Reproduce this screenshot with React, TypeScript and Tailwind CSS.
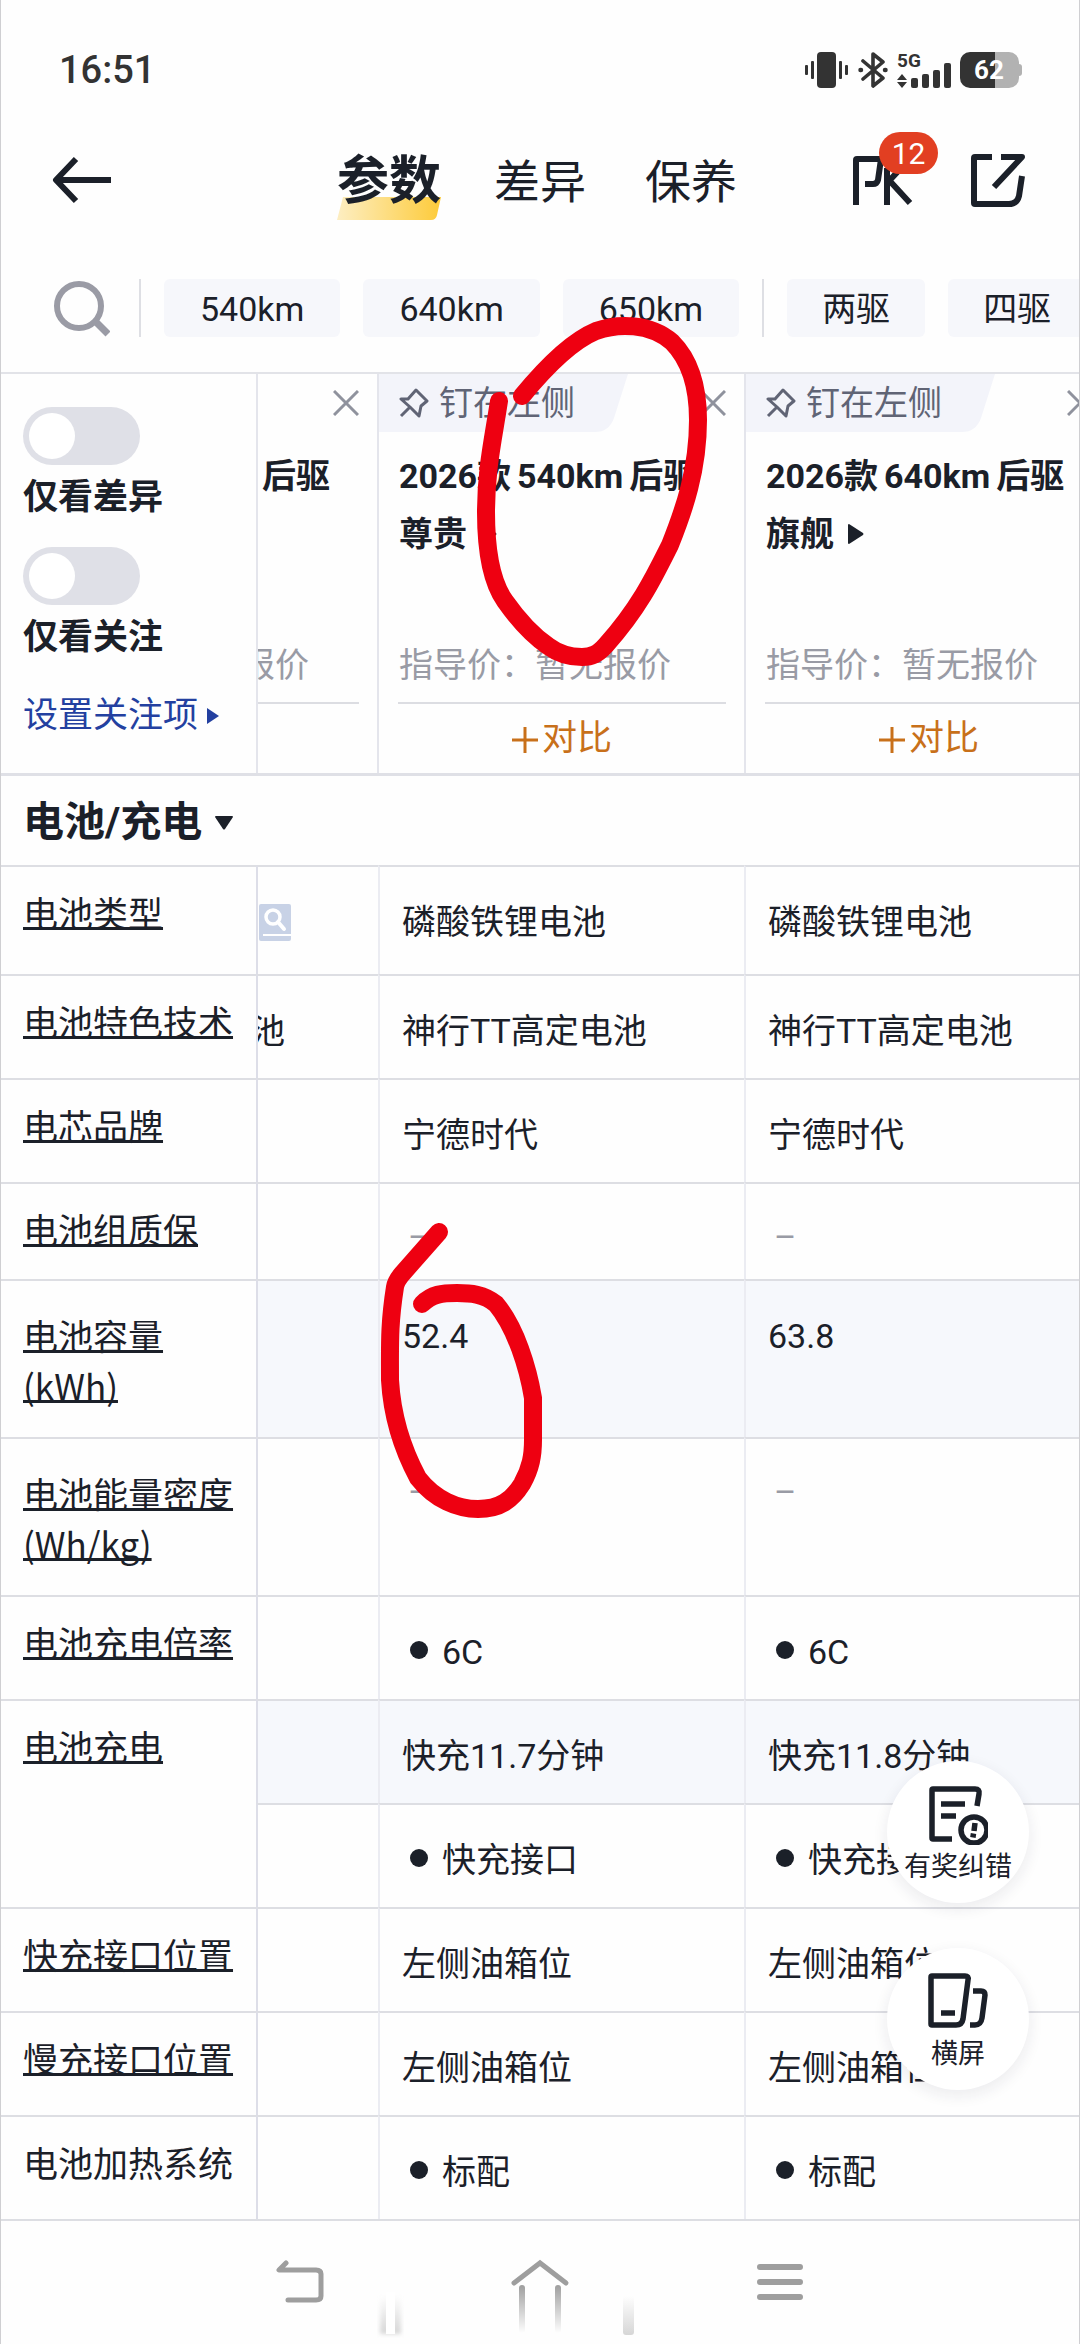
import { useState } from "react";
import type { ReactNode } from "react";
import clsx from "clsx";

interface Spec {
  label: string;
  unit?: string;
  plain?: boolean;
  height: string;
  span?: number;
  continued?: boolean;
  diff?: boolean;
  bullet?: boolean;
  previous?: "doc" | "text";
  values: [string, string];
}

const specs: Spec[] = [
  { label: "电池类型", height: "h-[109px]", previous: "doc", values: ["磷酸铁锂电池", "磷酸铁锂电池"] },
  { label: "电池特色技术", height: "h-[104px]", previous: "text", values: ["神行TT高定电池", "神行TT高定电池"] },
  { label: "电芯品牌", height: "h-[104px]", values: ["宁德时代", "宁德时代"] },
  { label: "电池组质保", height: "h-[97px]", values: ["–", "–"] },
  { label: "电池容量", unit: "(kWh)", height: "h-[158px]", diff: true, values: ["52.4", "63.8"] },
  { label: "电池能量密度", unit: "(Wh/kg)", height: "h-[158px]", values: ["–", "–"] },
  { label: "电池充电倍率", height: "h-[104px]", bullet: true, values: ["6C", "6C"] },
  { label: "电池充电", height: "h-[104px]", span: 2, diff: true, values: ["快充11.7分钟", "快充11.8分钟"] },
  { label: "快充接口", height: "h-[104px]", continued: true, bullet: true, values: ["快充接口", "快充接口"] },
  { label: "快充接口位置", height: "h-[104px]", values: ["左侧油箱位", "左侧油箱位"] },
  { label: "慢充接口位置", height: "h-[104px]", values: ["左侧油箱位", "左侧油箱位"] },
  { label: "电池加热系统", height: "h-[104px]", plain: true, bullet: true, values: ["标配", "标配"] },
];

const ranges = ["540km", "640km", "650km"];
const drives = ["两驱", "四驱"];
const tabs = ["参数", "差异", "保养"];

function StatusBar() {
  return (
    <div className="flex h-[140px] items-center justify-between pr-[57px] pl-[58px] text-[#333]">
      <span className="text-[38px] leading-none font-medium">16:51</span>
      <div className="flex items-center gap-[9px]">
        {/* vibrate */}
        <svg width="44" height="36" viewBox="0 0 44 36" fill="currentColor">
          <rect x="12" width="19" height="36" rx="4" />
          <rect x="6" y="9" width="3" height="18" rx="1" />
          <rect x="34" y="9" width="3" height="18" rx="1" />
          <rect x="0" y="13" width="3" height="10" rx="1" />
          <rect x="40" y="13" width="3" height="10" rx="1" />
        </svg>
        {/* bluetooth */}
        <svg width="30" height="36" viewBox="0 0 30 36" fill="none" stroke="currentColor" strokeWidth="3.6" strokeLinejoin="round" strokeLinecap="round">
          <path d="M5 9l20 17-10 8V2l10 8L5 27" />
          <path d="M2.500 18h.5M27 18h.5" strokeWidth="4.500" />
        </svg>
        {/* signal */}
        <div className="relative h-9 w-[54px]">
          <span className="absolute -top-px left-0 text-[19px] leading-none font-bold">5G</span>
          <svg width="54" height="36" viewBox="0 0 54 36" fill="currentColor">
            <path d="M5 22l5 6H0zM5 36l5-6H0z" />
            <rect x="14" y="26" width="7" height="10" rx="2" />
            <rect x="25" y="22" width="7" height="14" rx="2" />
            <rect x="36" y="18" width="7" height="18" rx="2" />
            <rect x="47" y="11" width="7" height="25" rx="2" />
          </svg>
        </div>
        {/* battery */}
        <div className="flex items-center">
          <div className="flex h-9 w-[59px] items-center justify-center rounded-[10px] bg-linear-to-r from-[#333] from-60% to-[#b2b2b2] to-60% pr-px text-[26px] leading-none font-bold text-white">
            62
          </div>
          <div className="h-3 w-[3px] rounded-r-sm bg-[#b2b2b2]" />
        </div>
      </div>
    </div>
  );
}

function Header() {
  const [active, setActive] = useState("参数");
  return (
    <header className="grid h-20 grid-cols-[336px_1fr_auto] items-center pr-[53px]">
      <button aria-label="返回" className="pl-[51px]">
        <svg width="60" height="48" viewBox="0 0 60 48" fill="none" stroke="currentColor" strokeWidth="6" strokeLinejoin="round">
          <path d="M24 3L4 24l20 21M4 24h55" />
        </svg>
      </button>
      <nav className="flex items-center">
        {tabs.map((tab) => (
          <button
            key={tab}
            onClick={() => setActive(tab)}
            className={clsx(
              "relative pt-1 leading-[76px] whitespace-nowrap",
              tab === active ? "mr-[53px] text-[52px] font-bold" : "mr-[59px] text-[46px]",
            )}
          >
            {tab === active && (
              <svg className="absolute bottom-0 left-0" width="104" height="23" viewBox="0 0 104 23">
                <defs>
                  <linearGradient id="tab-mark">
                    <stop offset="0" stopColor="#fdeec2" />
                    <stop offset="1" stopColor="#fdcb3a" />
                  </linearGradient>
                </defs>
                <path d="M6 0h98l-4 18q-1 5-6 5H0z" fill="url(#tab-mark)" />
              </svg>
            )}
            <span className="relative">{tab}</span>
          </button>
        ))}
      </nav>
      <div className="flex items-center gap-[58px]">
        <button aria-label="PK 对比" className="relative">
          <svg width="60" height="52" viewBox="0 0 60 52" fill="none" stroke="currentColor" strokeWidth="6">
            <path d="M3 51V6q0-1 1-1h24l-3 21q-1 4-5 4h-8" strokeLinejoin="round" />
            <path d="M34 51V14M35 25l22 24M36 27L50 12" />
          </svg>
          <span className="absolute -top-[22px] left-[26px] flex h-[42px] w-[59px] items-center justify-center rounded-full bg-[#e23f22] text-[30px] text-white">
            12
          </span>
        </button>
        <button aria-label="分享">
          <svg width="55" height="54" viewBox="0 0 55 54" fill="none" stroke="currentColor" strokeWidth="6" strokeLinejoin="round">
            <path d="M21 4H4q-1 0-1 1v45q0 1 1 1h34q8 0 10-8l3-20" />
            <path d="M30 4h21L23 34" />
          </svg>
        </button>
      </div>
    </header>
  );
}

function Filters() {
  return (
    <div className="mt-[59px] flex h-[58px] items-stretch gap-[23px] overflow-hidden pl-[51px]">
      <button aria-label="搜索" className="mr-[6px] shrink-0 text-[#9a9ba5]">
        <svg width="58" height="58" viewBox="0 0 58 58" fill="none" stroke="currentColor" strokeWidth="6">
          <circle cx="27" cy="27" r="22" />
          <path d="M43 42l13 13" strokeWidth="7" />
        </svg>
      </button>
      <span className="w-[2px] shrink-0 bg-[#dedfe4]" />
      {ranges.map((r) => (
        <button key={r} className="shrink-0 rounded-md bg-[#f6f7fb] px-9 pt-[2px] text-[34px]">
          {r}
        </button>
      ))}
      <span className="w-[2px] shrink-0 bg-[#dedfe4]" />
      {drives.map((d) => (
        <button key={d} className="shrink-0 rounded-md bg-[#f6f7fb] px-[35px] pt-[2px] text-[34px]">
          {d}
        </button>
      ))}
    </div>
  );
}

function Toggle({ id, label }: { id: string; label: string }) {
  const [on, setOn] = useState(false);
  return (
    <div className="mb-6">
      <input
        id={id}
        type="checkbox"
        checked={on}
        onChange={() => setOn(!on)}
        className="block h-[58px] w-[117px] appearance-none rounded-full bg-[#dfe0e7] p-[6px] before:block before:size-[46px] before:rounded-full before:bg-white checked:bg-[#fdcb3a] checked:before:ml-[59px]"
      />
      <label htmlFor={id} className="mt-2 block text-[35px] leading-[50px] font-bold">
        {label}
      </label>
    </div>
  );
}

function CloseIcon() {
  return (
    <svg width="26" height="26" viewBox="0 0 26 26" fill="none" stroke="#8f929d" strokeWidth="3">
      <path d="M1 1l24 24M25 1L1 25" />
    </svg>
  );
}

function ModelCard({ range, trim }: { range: string; trim: string }) {
  return (
    <article className="flex w-[367px] shrink-0 flex-col border-l-2 border-[#e4e5ec]">
      <div className="flex h-[58px] items-center justify-between pr-[18px] text-[#606475]">
        <button className="relative flex h-full w-[249px] items-center gap-[10px] pl-5 text-[34px]">
          <svg className="absolute top-0 left-0" width="249" height="58" viewBox="0 0 249 58">
            <path d="M0 0h249l-14 44q-5 14-19 14H0z" fill="#f3f4fa" />
          </svg>
          <svg className="relative" width="30" height="30" viewBox="0 0 30 30" fill="none" stroke="currentColor" strokeWidth="3" strokeLinejoin="round">
            <path d="M2 11l7 0L17 2l11 11-6 5-2 10-9-9zM11 19L2 28" />
          </svg>
          <span className="relative">钉在左侧</span>
        </button>
        <button aria-label="移除">
          <CloseIcon />
        </button>
      </div>
      <h3 className="mt-[15px] pl-5 text-[34px] leading-[58px] font-bold">
        <span className="flex gap-[6px] whitespace-nowrap">
          <span>2026款</span>
          <span>{range}</span>
          <span>后驱</span>
        </span>
        <span className="flex items-center gap-[14px]">
          {trim}
          <svg width="16" height="20" viewBox="0 0 16 20" fill="currentColor">
            <path d="M0 1q0-1 1-1l14 9q1 1 0 2L1 20q-1 0-1-1z" />
          </svg>
        </span>
      </h3>
      <p className="mt-auto mb-3 pl-5 text-[34px] leading-[50px] whitespace-nowrap text-[#999ba5]">指导价：暂无报价</p>
      <button className="mr-[18px] ml-[19px] flex h-[71px] items-center justify-center gap-[4px] border-t-2 border-[#dcdde2] pt-[2px] text-[35px] text-[#c8701a]">
        <svg width="26" height="26" viewBox="0 0 26 26" fill="none" stroke="currentColor" strokeWidth="3">
          <path d="M13 0v26M0 13h26" />
        </svg>
        对比
      </button>
    </article>
  );
}

// the model scrolled under the fixed column, only its right edge shows
function PreviousModel() {
  return (
    <article className="flex w-[121px] shrink-0 flex-col overflow-hidden border-l-2 border-[#e4e5ec] whitespace-nowrap">
      <div className="flex h-[58px] items-center justify-end pr-[18px]">
        <button aria-label="移除">
          <CloseIcon />
        </button>
      </div>
      <h3 className="mt-[15px] flex justify-end pr-[47px] text-[34px] leading-[58px] font-bold">后驱</h3>
      <p className="mt-auto mb-3 flex justify-end pr-[68px] text-[34px] leading-[50px] text-[#999ba5]">报价</p>
      <div className="mr-[18px] h-[71px] border-t-2 border-[#dcdde2]" />
    </article>
  );
}

function DocIcon() {
  return (
    <svg width="32" height="37" viewBox="0 0 32 37">
      <rect width="32" height="37" rx="2" fill="#c8d2e6" />
      <circle cx="14" cy="13" r="7" fill="none" stroke="#fff" strokeWidth="3.5" />
      <path d="M19 18l6 7" stroke="#fff" strokeWidth="4" strokeLinecap="round" />
      <path d="M4 31h28" stroke="#fff" strokeWidth="2" />
    </svg>
  );
}

function SpecTable() {
  return (
    <table className="w-full table-fixed border-separate border-spacing-0 border-b-2 border-[#dddee3] text-left text-[34px] leading-[50px]">
      <colgroup>
        <col className="w-[255px]" />
        <col className="w-[122px]" />
        <col className="w-[366px]" />
        <col />
      </colgroup>
      <tbody>
        {specs.map((s) => (
          <tr key={s.label} className={s.height}>
            {!s.continued && (
              <th
                scope="row"
                rowSpan={s.span}
                className={clsx(
                  "border-t-2 border-[#dddee3] pl-[22px] align-top font-['Noto_Sans_CJK_SC',sans-serif] text-[35px] font-normal whitespace-nowrap",
                  s.unit ? "pt-[29px]" : "pt-[20px]",
                  !s.plain && "underline decoration-[3px] underline-offset-[0px] [text-decoration-skip-ink:none]",
                )}
              >
                {s.label}
                {s.unit && <span className="block">{s.unit}</span>}
              </th>
            )}
            <td
              className={clsx(
                "overflow-hidden border-t-2 border-l-2 border-t-[#dddee3] border-l-[#dddee8] pt-[30px] align-top",
                s.diff && "bg-[#f6f8fc]",
              )}
            >
              {s.previous === "doc" && (
                <div className="flex h-[50px] items-center pl-px">
                  <DocIcon />
                </div>
              )}
              {s.previous === "text" && <div className="flex justify-end pr-[93px]">池</div>}
            </td>
            {s.values.map((v, i) => (
              <td
                key={i}
                className={clsx(
                  "border-t-2 border-l-2 border-t-[#dddee3] border-l-[#ebecf2] pt-[30px] pl-[22px] align-top whitespace-nowrap",
                  s.diff && "bg-[#f6f8fc]",
                )}
              >
                {s.bullet ? (
                  <span className="flex items-center gap-[14px] pl-2">
                    <span className="mb-1 size-[18px] rounded-full bg-[#1b2029]" />
                    {v}
                  </span>
                ) : v === "–" ? (
                  <span className="block pl-[6px] leading-[46px] text-[#999ba5]">{v}</span>
                ) : (
                  v
                )}
              </td>
            ))}
          </tr>
        ))}
      </tbody>
    </table>
  );
}

function FloatingButton({ label, children }: { label: string; children: ReactNode }) {
  return (
    <button className="flex size-[142px] flex-col items-center rounded-full bg-white pt-6 text-[27px] leading-[38px] shadow-[0_5px_14px_2px_rgba(30,30,60,0.07)]">
      {children}
      <span className="mt-[3px]">{label}</span>
    </button>
  );
}

function FloatingActions() {
  return (
    <div className="absolute right-[50px] bottom-[131px] flex flex-col gap-[45px]">
      <FloatingButton label="有奖纠错">
        <svg className="shrink-0" width="60" height="60" viewBox="0 0 60 60" fill="none" stroke="currentColor" strokeWidth="5.5">
          <path d="M24 54H5q-1 0-1-1V5q0-1 1-1h42q5 0 4 5l-2 12" strokeLinejoin="round" />
          <path d="M13 19h24M13 31h15" />
          <circle cx="46" cy="45" r="13" />
          <path d="M47 38l-1 8M45.500 48.500l-.6 4" />
        </svg>
      </FloatingButton>
      <FloatingButton label="横屏">
        <svg className="shrink-0" width="60" height="60" viewBox="0 0 60 60" fill="none" stroke="currentColor" strokeWidth="5.5" strokeLinejoin="round">
          <path d="M4 4h33q4 0 3 4l-5 39q-1 6-7 6H4q-1 0-1-1V5q0-1 1-1z" />
          <path d="M13 41h14" />
          <path d="M45 19h8q4 0 4 4l-3 23q-1 7-7 7h-5" />
        </svg>
      </FloatingButton>
    </div>
  );
}

function SystemNav() {
  return (
    <footer className="grid h-[125px] grid-cols-[240px_240px_240px] justify-center pt-[38px] text-[#9e9e9e]">
      <button aria-label="返回" className="flex justify-center">
        <svg width="50" height="48" viewBox="0 0 50 48" fill="none" stroke="currentColor" strokeWidth="5" strokeLinecap="round" strokeLinejoin="round">
          <path d="M11 4L4 11h37q5 0 5 4v22q0 4-5 4H13" />
        </svg>
      </button>
      <button aria-label="主页" className="flex justify-center">
        <svg width="60" height="76" viewBox="0 0 60 76" fill="none">
          <defs>
            <linearGradient id="leg" x1="0" y1="0" x2="0" y2="1">
              <stop offset="0" stopColor="#9e9e9e" />
              <stop offset="1" stopColor="#9e9e9e" stopOpacity="0" />
            </linearGradient>
          </defs>
          <path d="M4 24L30 4l26 20" stroke="currentColor" strokeWidth="5" strokeLinecap="round" />
          <rect x="9" y="26" width="6" height="48" rx="3" fill="url(#leg)" />
          <rect x="45" y="26" width="6" height="48" rx="3" fill="url(#leg)" />
        </svg>
      </button>
      <button aria-label="最近任务" className="flex justify-center">
        <svg width="46" height="48" viewBox="0 0 46 48" stroke="currentColor" strokeWidth="6" strokeLinecap="round">
          <path d="M3 8h40M3 23h40M3 38h40" />
        </svg>
      </button>
    </footer>
  );
}

// faded marks left over the bottom bar
function FadedMarks() {
  return (
    <svg className="pointer-events-none absolute bottom-0 left-[370px]" width="350" height="64" viewBox="0 0 350 64">
      <defs>
        <linearGradient id="mark" x1="0" y1="0" x2="0" y2="1">
          <stop offset="0" stopColor="#bbb" stopOpacity="0" />
          <stop offset="1" stopColor="#bbb" stopOpacity="0.6" />
        </linearGradient>
        <filter id="soft">
          <feGaussianBlur stdDeviation="2" />
        </filter>
      </defs>
      <rect x="9" y="14" width="21" height="38" fill="url(#mark)" filter="url(#soft)" />
      <rect x="15" y="10" width="9" height="42" fill="#fff" />
      <rect x="252" y="14" width="11" height="39" rx="3" fill="url(#mark)" />
    </svg>
  );
}

function MarkerStrokes() {
  return (
    <svg
      className="pointer-events-none absolute top-0 left-0"
      width="760"
      height="1560"
      viewBox="1 0 760 1560"
      fill="none"
      stroke="#ee0011"
      strokeWidth="18"
      strokeLinecap="round"
      strokeLinejoin="round"
    >
      <path d="M499 401C493 440 486 470 486 512C486 545 490 580 505 601C517 618 532 635 548 646C560 655 572 657 582 657C592 657 598 654 606 645C640 607 655 575 670 545C684 510 698 470 698 420C698 385 690 360 672 342C650 323 618 323 596 331C572 341 545 368 522 396" />
      <path d="M439 1232L402 1274Q396 1281 395 1287C389 1325 390 1345 390 1380C392 1415 403 1450 418 1478C435 1500 458 1509 478 1509C500 1509 512 1500 522 1484C531 1468 533 1455 533 1440V1398C528 1368 516 1328 496 1304C484 1294 470 1293 457 1293C442 1293 432 1294 422 1304" />
    </svg>
  );
}

export default function App() {
  return (
    <div className="relative w-full overflow-hidden border-x border-[#cfcfd2] bg-[#fefefe] font-[Roboto,'Noto_Sans_CJK_SC',sans-serif] text-[#1b2029]">
      <StatusBar />
      <Header />
      <Filters />

      <section className="mt-[35px] flex h-[401px] overflow-hidden border-t-2 border-[#e2e3e8]">
        <aside className="w-[255px] shrink-0 pt-[33px] pl-[22px]">
          <Toggle id="only-diff" label="仅看差异" />
          <Toggle id="only-follow" label="仅看关注" />
          <a href="#follow" className="flex items-center gap-[9px] pt-1 text-[35px] leading-[50px] whitespace-nowrap text-[#2340a0]">
            设置关注项
            <svg width="12" height="16" viewBox="0 0 12 16" fill="currentColor">
              <path d="M0 0l12 8-12 8z" />
            </svg>
          </a>
        </aside>
        <PreviousModel />
        <ModelCard range="540km" trim="尊贵" />
        <ModelCard range="640km" trim="旗舰" />
      </section>

      <h2 className="border-t-[3px] border-[#dfe0e6] text-[41px] font-bold">
        <button className="flex h-[89px] items-center gap-[13px] pt-1 pl-[22px]">
          电池/充电
          <svg width="18" height="14" viewBox="0 0 18 14" fill="currentColor">
            <path d="M0 1q0-1 1-1h16q1 0 1 1l-8 12q-1 1-2 0z" />
          </svg>
        </button>
      </h2>

      <main className="relative">
        <SpecTable />
        <FloatingActions />
      </main>

      <SystemNav />
      <FadedMarks />
      <MarkerStrokes />
    </div>
  );
}
